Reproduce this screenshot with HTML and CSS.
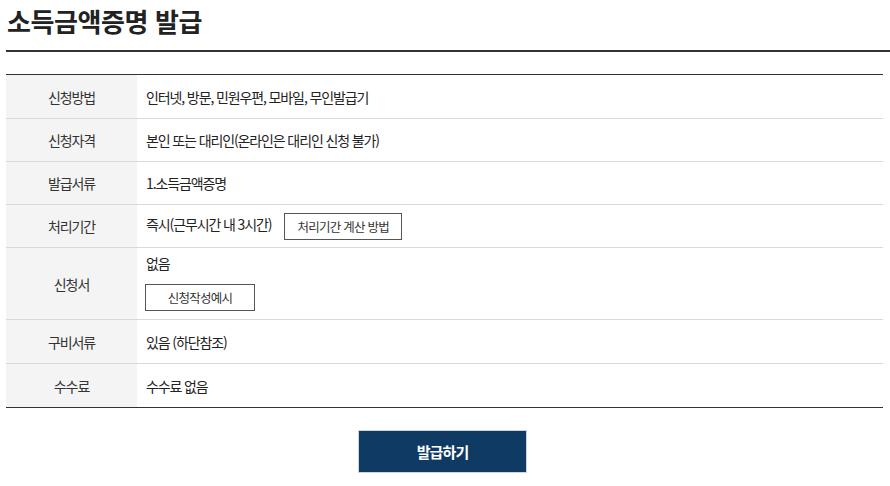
FILE: index.html
```html
<!DOCTYPE html>
<html lang="ko">
<head>
<meta charset="utf-8">
<title>소득금액증명 발급</title>
<link rel="stylesheet" href="styles.css">
</head>
<body>
<div class="page">
  <h2 class="page-title">소득금액증명 발급</h2>
  <table class="info-table">
    <tbody>
      <tr class="row-first">
        <th>신청방법</th>
        <td>인터넷, 방문, 민원우편, 모바일, 무인발급기</td>
      </tr>
      <tr>
        <th>신청자격</th>
        <td>본인 또는 대리인(온라인은 대리인 신청 불가)</td>
      </tr>
      <tr>
        <th>발급서류</th>
        <td>1.소득금액증명</td>
      </tr>
      <tr>
        <th>처리기간</th>
        <td>즉시(근무시간 내 3시간)<button class="btn-line btn-inline" type="button">처리기간 계산 방법</button></td>
      </tr>
      <tr class="tall">
        <th>신청서</th>
        <td>
          <div class="cell-text">없음</div>
          <button class="btn-line btn-block" type="button">신청작성예시</button>
        </td>
      </tr>
      <tr class="row-wide">
        <th>구비서류</th>
        <td>있음 (하단참조)</td>
      </tr>
      <tr class="row-wide">
        <th>수수료</th>
        <td>수수료 없음</td>
      </tr>
    </tbody>
  </table>
  <div class="actions">
    <button class="btn-primary" type="button">발급하기</button>
  </div>
</div>
</body>
</html>
```
FILE: styles.css
```css
html, body {
  margin: 0;
  padding: 0;
  background: #ffffff;
}
body {
  font-family: "Noto Sans CJK KR", "Noto Sans", sans-serif;
  color: #333333;
}
.page {
  padding-left: 6px;
}
.page-title {
  margin: 0 0 22px 0;
  padding: 0 0 8px 1px;
  font-size: 26px;
  line-height: 42px;
  font-weight: 700;
  letter-spacing: -0.4px;
  color: #222222;
  border-bottom: 2px solid #333333;
}
.info-table {
  width: calc(100% - 7px);
  border-collapse: collapse;
  border-top: 1px solid #333333;
  border-bottom: 1px solid #333333;
}
.info-table th,
.info-table td {
  height: 43px;
  padding: 0 9px;
  font-size: 14px;
  letter-spacing: -0.08em;
  border-bottom: 1px solid #d9d9d9;
  text-align: left;
  vertical-align: middle;
  box-sizing: border-box;
}
.info-table tr.row-first th,
.info-table tr.row-first td,
.info-table tr.row-wide th,
.info-table tr.row-wide td {
  height: 44px;
}
.info-table tr:last-child th,
.info-table tr:last-child td {
  border-bottom: none;
}
.info-table th {
  width: 131px;
  padding: 0;
  text-align: center;
  font-weight: 400;
  background: #f4f4f4;
  color: #333333;
}
.info-table td {
  color: #222222;
}
.info-table tr.tall th,
.info-table tr.tall td {
  height: 72px;
}
.info-table tr.tall td {
  vertical-align: top;
  padding-top: 4px;
  padding-bottom: 8px;
}
.cell-text {
  line-height: 22px;
}
.btn-line {
  font-family: inherit;
  font-size: 12.5px;
  letter-spacing: -0.06em;
  color: #333333;
  background: #ffffff;
  border: 1px solid #555555;
  height: 27px;
  padding: 0 11px;
  cursor: pointer;
  vertical-align: middle;
}
.btn-inline {
  margin-left: 13px;
  width: 118px;
}
.btn-block {
  display: block;
  margin-top: 10px;
  margin-left: -1px;
  width: 110px;
}
.actions {
  display: flex;
  justify-content: center;
  padding-top: 22px;
  padding-right: 11px;
}
.btn-primary {
  font-family: inherit;
  width: 169px;
  height: 43px;
  font-size: 15px;
  font-weight: 700;
  letter-spacing: -0.06em;
  color: #ffffff;
  background: #0f3a63;
  border: 1px solid #d0d5dc;
  cursor: pointer;
}
```
